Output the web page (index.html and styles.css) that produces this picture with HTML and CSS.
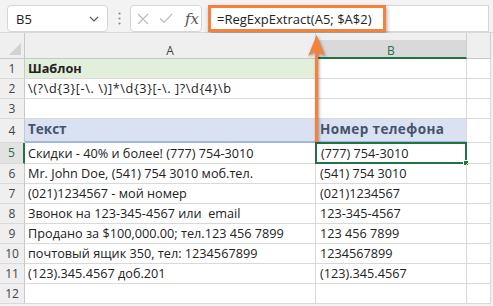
FILE: index.html
```html
<!DOCTYPE html>
<html lang="ru">
<head>
<meta charset="utf-8">
<title>RegExpExtract</title>
<link rel="stylesheet" href="styles.css">
</head>
<body>
<div class="app">
  <div class="toolbar">
    <div class="namebox">
      <span class="nb-text">B5</span>
      <svg class="chev" width="10" height="6" viewBox="0 0 10 6"><path d="M1 1 L5 5 L9 1" fill="none" stroke="#555" stroke-width="1.2"/></svg>
    </div>
    <div class="dots">
      <svg width="3" height="13" viewBox="0 0 3 13"><circle cx="1.5" cy="1.5" r="1.1" fill="#8a8a8a"/><circle cx="1.5" cy="6.5" r="1.1" fill="#8a8a8a"/><circle cx="1.5" cy="11.5" r="1.1" fill="#8a8a8a"/></svg>
    </div>
    <div class="fxbox">
      <svg width="12" height="12" viewBox="0 0 12 12"><path d="M1 1 L11 11 M11 1 L1 11" stroke="#bdbdbd" stroke-width="1.2" fill="none"/></svg>
      <svg width="14" height="11" viewBox="0 0 14 11"><path d="M1 5.5 L5 9.5 L13 1" stroke="#bdbdbd" stroke-width="1.2" fill="none"/></svg>
      <span class="fx">fx</span>
    </div>
    <div class="formula">
      <span class="formula-hl">=RegExpExtract(A5; $A$2)</span>
    </div>
  </div>

  <div class="sheet">
    <div class="cell corner"><span class="tri"></span></div>
    <div class="cell colhead">A</div>
    <div class="cell colhead sel">B</div>
    <div class="cell colhead"></div>

    <div class="cell rowhead">1</div>
    <div class="cell a tpl bold">Шаблон</div>
    <div class="cell"></div>
    <div class="cell"></div>

    <div class="cell rowhead">2</div>
    <div class="cell a regex">\(?\d{3}[-\. \)]*\d{3}[-\. ]?\d{4}\b</div>
    <div class="cell"></div>
    <div class="cell"></div>

    <div class="cell rowhead">3</div>
    <div class="cell"></div>
    <div class="cell"></div>
    <div class="cell"></div>

    <div class="cell rowhead r4">4</div>
    <div class="cell a hdr">Текст</div>
    <div class="cell b hdr wide">Номер телефона</div>
    <div class="cell"></div>

    <div class="cell rowhead selrow">5</div>
    <div class="cell a">Скидки - 40% и более! (777) 754-3010</div>
    <div class="cell b active">(777) 754-3010<span class="handle"></span></div>
    <div class="cell"></div>

    <div class="cell rowhead">6</div>
    <div class="cell a">Mr. John Doe, (541) 754 3010 моб.тел.</div>
    <div class="cell b">(541) 754 3010</div>
    <div class="cell"></div>

    <div class="cell rowhead">7</div>
    <div class="cell a">(021)1234567 - мой номер</div>
    <div class="cell b">(021)1234567</div>
    <div class="cell"></div>

    <div class="cell rowhead">8</div>
    <div class="cell a">Звонок на 123-345-4567 или&nbsp; email</div>
    <div class="cell b">123-345-4567</div>
    <div class="cell"></div>

    <div class="cell rowhead">9</div>
    <div class="cell a">Продано за $100,000.00; тел.123 456 7899</div>
    <div class="cell b">123 456 7899</div>
    <div class="cell"></div>

    <div class="cell rowhead">10</div>
    <div class="cell a">почтовый ящик 350, тел: 1234567899</div>
    <div class="cell b">1234567899</div>
    <div class="cell"></div>

    <div class="cell rowhead">11</div>
    <div class="cell a">(123).345.4567 доб.201</div>
    <div class="cell b">(123).345.4567</div>
    <div class="cell"></div>

    <div class="cell rowhead">12</div>
    <div class="cell"></div>
    <div class="cell"></div>
    <div class="cell"></div>
  </div>

  <svg class="arrow" width="493" height="306" viewBox="0 0 493 306">
    <rect x="315" y="48" width="3.2" height="94" fill="#f4823d"/>
    <polygon points="316.6,35 325,56 316.6,51 308.2,56" fill="#f4823d"/>
  </svg>
</div>
</body>
</html>
```

FILE: styles.css
```css
* { box-sizing: border-box; }
html, body { margin: 0; padding: 0; background: #ffffff; }
body { font-family: "Open Sans", "Noto Sans", sans-serif; color: #222; }

.app {
  position: relative;
  width: 493px;
  height: 306px;
  overflow: hidden;
  background: #f2f2f2;
}

.toolbar {
  height: 33px;
  display: flex;
  align-items: flex-start;
  padding-top: 5px;
  padding-left: 7px;
  border-bottom: 1px solid #d8d8d8;
  background: #f3f3f3;
}

.namebox {
  width: 101px;
  height: 27px;
  background: #fff;
  border: 1px solid #d6d6d6;
  border-radius: 4px;
  display: flex;
  align-items: center;
  justify-content: space-between;
  padding: 0 8px 0 8px;
  font-size: 13px;
  color: #222;
}
.chev { margin-top: 1px; }

.dots {
  width: 22px;
  height: 27px;
  display: flex;
  align-items: center;
  justify-content: center;
}

.fxbox {
  width: 72px;
  height: 27px;
  background: #fff;
  border: 1px solid #d6d6d6;
  border-radius: 4px;
  display: flex;
  align-items: center;
  gap: 10px;
  padding-left: 6px;
}
.fx {
  font-family: "DejaVu Serif", "Liberation Serif", serif;
  font-style: italic;
  font-size: 15px;
  color: #555;
  margin-left: 2px;
}

.formula {
  margin-left: 6px;
  width: 281px;
  height: 27px;
  background: #fff;
  border: 1px solid #d6d6d6;
  border-left: none;
  display: flex;
  align-items: stretch;
}
.formula-hl {
  width: 178px;
  margin-top: -1px;
  height: 27px;
  border: 3px solid #f4823d;
  box-shadow: 1px 2px 4px rgba(0,0,0,0.35);
  display: flex;
  align-items: center;
  padding-left: 6px;
  font-size: 13px;
  color: #222;
  background: #fff;
}

.sheet {
  display: grid;
  grid-template-columns: 25px 291px 151px 24px;
  grid-template-rows: 26px 20px 20px 20px 24px 21px repeat(7, 20px);
  width: 491px;
  background: #fff;
  border-right: 1px solid #bdbdbd;
}

.cell {
  border-right: 1px solid #d9d9d9;
  border-bottom: 1px solid #d9d9d9;
  font-size: 12.7px;
  line-height: 1;
  display: flex;
  align-items: center;
  white-space: nowrap;
  position: relative;
}
.cell.a { padding-left: 3px; }
.cell.b { padding-left: 4px; }
.regex { letter-spacing: 0.6px; }

.corner {
  background: #efefef;
  border-right: 1px solid #c8c8c8;
  border-bottom: 1px solid #c8c8c8;
}
.tri {
  position: absolute;
  right: 3px;
  bottom: 3px;
  width: 0;
  height: 0;
  border-left: 12px solid transparent;
  border-bottom: 12px solid #d2d2d2;
}

.colhead {
  background: #efefef;
  justify-content: center;
  padding-top: 11px;
  color: #444;
  font-size: 12px;
  border-right: 1px solid #cfcfcf;
  border-bottom: 1px solid #c8c8c8;
}
.colhead.sel {
  background: linear-gradient(#efefef 0 7px, #d9d9d9 7px);
  color: #217346;
  border-bottom: 2px solid #217346;
}

.rowhead {
  background: #efefef;
  justify-content: center;
  color: #444;
  font-size: 12px;
  border-right: 1px solid #c8c8c8;
  border-bottom: 1px solid #d9d9d9;
}
.rowhead.selrow {
  background: #e2e2e2;
  color: #217346;
  border-right: 2px solid #217346;
}

.tpl { background: #e2efda; }
.bold { font-weight: 700; }

.hdr {
  background: #d9e1f2;
  font-weight: 700;
  font-size: 13.5px;
  color: #44546a;
  border-bottom: 2px solid #a4b6de;
}
.hdr.wide { letter-spacing: 0.4px; }

.active {
  border: 2px solid #217346;
  margin: -1px 0 0 -1px;
  padding-left: 4px;
}
.handle {
  position: absolute;
  right: -4px;
  bottom: -4px;
  width: 6px;
  height: 6px;
  background: #217346;
  border: 1px solid #fff;
}

.arrow {
  position: absolute;
  left: 0;
  top: 0;
  pointer-events: none;
  filter: drop-shadow(1px 1px 1.5px rgba(0,0,0,0.35));
}
```
